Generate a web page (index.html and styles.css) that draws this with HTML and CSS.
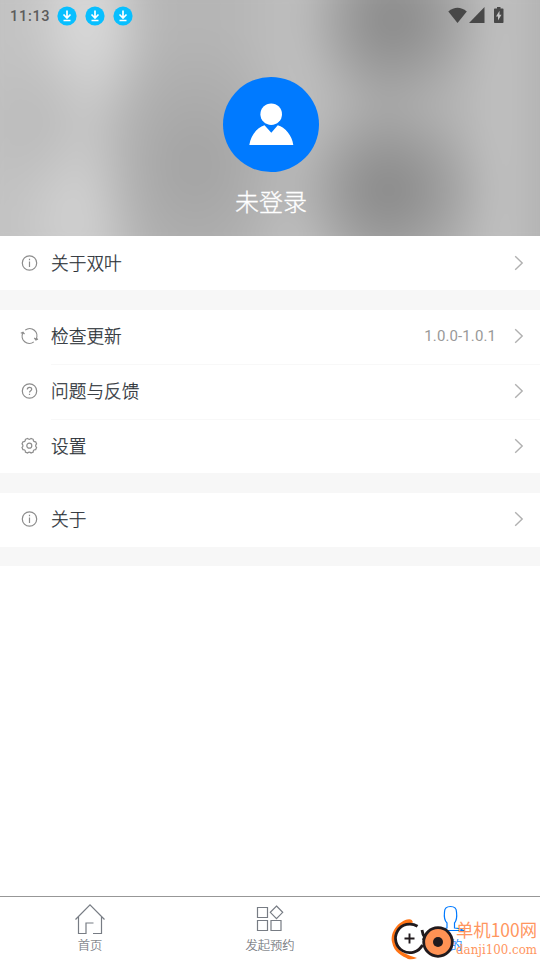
FILE: index.html
```html
<!DOCTYPE html>
<html lang="zh-CN">
<head>
<meta charset="utf-8">
<title>我的</title>
<link rel="stylesheet" href="styles.css">
</head>
<body>
<svg class="defs" aria-hidden="true">
  <symbol id="download" viewBox="0 0 20 20"><circle cx="10" cy="10" r="9.6" fill="#08bfff"/><path d="M10 4.5v7M6.5 8.5l3.5 3.5 3.5-3.5M6.5 14.5h7" fill="none" stroke="#fff" stroke-width="1.7"/></symbol>
  <symbol id="info" viewBox="0 0 18 18"><circle cx="9.500" cy="9" r="7.200"/><path d="M9.500 7.500v5.500M9.500 4.800v1.500"/></symbol>
  <symbol id="chevron" viewBox="0 0 10 16"><path d="M1.200 1.200 8.200 8l-7 6.800"/></symbol>
</svg>
<div class="app">
  <header class="hero">
    <div class="backdrop"></div>
    <div class="status">
      <span class="clock">11:13</span>
      <svg class="dl"><use href="#download"/></svg>
      <svg class="dl"><use href="#download"/></svg>
      <svg class="dl"><use href="#download"/></svg>
      <svg class="signals" viewBox="0 0 60 20"><path d="M.3 5.500Q9.500-2 18.800 5.500L9.500 17z"/><path d="M36.500 1v16H21z"/><path d="M49 1h3.500v1.500h2.200q.8 0 .8.800v13q0 .700-.8.700h-7.900q-.8 0-.8-.700v-13q0-.800.8-.800h2.200z"/><path d="M51.500 4.800 48 10.500h2v4L53.500 8.800h-2z" fill="#c4c4c4"/></svg>
    </div>
    <svg class="avatar" viewBox="0 0 96 96"><ellipse cx="48" cy="47.500" rx="48" ry="47.500" fill="#007aff"/><circle cx="48.200" cy="37.200" r="10.800" fill="#fff"/><path d="M26.300 68C28 58 34 50.500 41.500 48.300L48.300 55.700 54.800 48.300C62 50.500 69 58 70.300 68z" fill="#fff"/></svg>
    <div class="name">未登录</div>
  </header>
  <main class="list">
    <section class="group">
      <div class="row"><svg class="icon"><use href="#info"/></svg><span class="label">关于双叶</span><svg class="arrow"><use href="#chevron"/></svg></div>
    </section>
    <section class="group">
      <div class="row raised"><svg class="icon" viewBox="0 0 18 18"><path d="M5.200 3.100A7.200 7.200 0 0 1 16 12.200M13.800 14.900A7.200 7.200 0 0 1 3 5.800M.8 6.200l2.200-1 1.500 2M18 11.900l-2.100 1-1.600-2"/></svg><span class="label">检查更新</span><span class="version">1.0.0-1.0.1</span><svg class="arrow"><use href="#chevron"/></svg></div>
      <div class="row raised"><svg class="icon" viewBox="0 0 18 18"><circle cx="9.500" cy="9" r="7.200"/><path d="M7.300 7.400C7.300 4.700 11.700 4.700 11.700 7.200 11.700 8.800 9.500 8.700 9.500 10.600M9.500 11.700v1.300"/></svg><span class="label">问题与反馈</span><svg class="arrow"><use href="#chevron"/></svg></div>
      <div class="row"><svg class="icon" viewBox="0 0 18 18"><circle cx="9.300" cy="8.700" r="2.500"/><path d="M7.500 1.400Q9.300 3.300 11.100 1.400L13.200 2.300Q13.100 4.900 15.700 4.800L16.600 6.900Q14.700 8.700 16.600 10.500L15.700 12.600Q13.100 12.500 13.200 15.100L11.100 16Q9.300 14.100 7.500 16L5.400 15.100Q5.500 12.500 2.900 12.600L2 10.500Q3.900 8.700 2 6.900L2.900 4.800Q5.500 4.900 5.400 2.300z"/></svg><span class="label">设置</span><svg class="arrow"><use href="#chevron"/></svg></div>
    </section>
    <section class="group">
      <div class="row raised"><svg class="icon"><use href="#info"/></svg><span class="label">关于</span><svg class="arrow"><use href="#chevron"/></svg></div>
    </section>
  </main>
  <nav class="tabs">
    <div class="tab"><svg class="tab-icon" viewBox="0 0 32 32"><path d="M1.500 17.500 16 2.800l14.500 14.700M4.500 15v16.500h7.500V21h7.500M27.500 15v16.500h-8.500"/></svg><span>首页</span></div>
    <div class="tab"><svg class="tab-icon" viewBox="0 0 32 32"><path d="M3.500 5.500h10v10h-10zM3.500 18.500h10v10h-10zM17 18.500h10v10H17zM22.500 4l6.200 6.300-6.200 6.300-6.200-6.300z"/></svg><span>发起预约</span></div>
    <div class="tab active"><svg class="tab-icon" viewBox="0 0 32 32"><path d="M2 31v-2q4-2 11-3v-5C10 18 10 14 10.500 10Q10.500 4.500 16.500 4.500T22.500 10C23 14 23 18 20.500 21v5q6 .5 9 2.500H6"/></svg><span>我的</span></div>
  </nav>
  <svg class="watermark" viewBox="0 0 150 50">
    <path d="M23 12.500Q22 8 17 9.500C8 12 0 22 2 32 4 43 13 46 18 49Q22 50 27 48 20 46 16 44C6 40 4 32 6 26 8 18 15 14 23 12.500z" fill="#ff7416"/>
    <circle cx="19.500" cy="28.500" r="14" fill="#fff"/>
    <path d="M27.500 16.300A14.300 14.300 0 1 0 32.500 35M32 20Q32.500 25 35.500 28.500M40.500 20.500Q35 23 33.500 30" fill="none" stroke="#211a1d" stroke-width="2.800"/>
    <path d="M14.500 28.500h10M19.500 23.500v10" stroke="#211a1d" stroke-width="1.900"/>
    <circle cx="48" cy="32" r="14.300" fill="#ff9254" stroke="#211a1d" stroke-width="2.800"/>
    <circle cx="48" cy="32" r="5" fill="#211a1d"/>
    <text class="brand" x="66" y="27" textLength="81" lengthAdjust="spacingAndGlyphs">单机100网</text>
    <text class="domain" x="66" y="43.500" textLength="81" lengthAdjust="spacingAndGlyphs">danji100.com</text>
  </svg>
</div>
</body>
</html>
```
FILE: styles.css
```css
* { box-sizing: border-box; }
body { margin: 0; background: #fff; font-family: Roboto, "Noto Sans CJK SC", sans-serif; }
.defs { position: absolute; width: 0; height: 0; }
.app { width: 540px; height: 960px; display: flex; flex-direction: column; position: relative; overflow: hidden; }
.hero { height: 236px; flex: none; display: flex; flex-direction: column; align-items: center; position: relative; overflow: hidden; isolation: isolate; }
.backdrop {
  position: absolute; inset: -40px; z-index: -1; filter: blur(18px);
  background:
    radial-gradient(ellipse 95px 85px at 434px 60px, #7e7e7ed0, #88888800),
    radial-gradient(ellipse 105px 85px at 428px 230px, #7e7e7ed0, #88888800),
    radial-gradient(ellipse 110px 130px at 235px 205px, #a2a2a2, #a6a6a600),
    radial-gradient(ellipse 65px 80px at 75px 165px, #b8b8b8cc, #b8b8b800),
    radial-gradient(ellipse 60px 110px at 130px 60px, #dddddd, #d4d4d400),
    radial-gradient(ellipse 60px 120px at 118px 250px, #d2d2d2, #cccccc00),
    linear-gradient(90deg, #c2c2c2 0, #c2c2c2 40px, #c6c6c6 120px, #b5b5b5 200px, #b5b5b5 270px, #c0c0c0 340px, #a9a9a9 420px, #b2b2b2 490px, #c2c2c2 545px, #b0b0b0 590px);
}
.status { align-self: stretch; height: 32px; padding: 0 32px 0 10px; display: flex; align-items: center; }
.clock { width: 47px; font-size: 14.500px; letter-spacing: .7px; font-weight: 500; color: #5c5c5c; }
.dl { width: 20px; height: 20px; margin-right: 8px; }
.signals { width: 60px; height: 20px; margin-left: auto; margin-top: -1px; fill: #484848; }
.avatar { width: 96px; height: 96px; margin: 45px 0 0 2px; flex: none; }
.name { margin: 10px 0 0 2px; font-size: 24px; line-height: 36px; font-weight: 300; font-family: "Noto Sans CJK SC", sans-serif; color: #fff; -webkit-text-stroke: .3px; }
.list { flex: 1; }
.group { border-bottom: 20px solid #f7f7f7; }
.group:last-child { border-bottom-width: 19px; }
.row { height: 54px; padding: 0 16px 0 20px; display: flex; align-items: center; background: linear-gradient(#f8f8f8, #f8f8f8) 51px 0 / 100% 0 no-repeat; }
.row + .row { height: 55px; background-size: 100% 1px; }
.row + .row + .row { height: 54px; }
.row.raised { padding-bottom: 2px; }
.icon { width: 18px; height: 18px; margin-right: 13px; fill: none; stroke: #8c8c8c; stroke-width: 1.200; overflow: visible; }
.label { flex: 1; font-family: "Noto Sans CJK SC", sans-serif; font-weight: 300; font-size: 17.700px; line-height: 26px; padding-bottom: 2px; color: #2a3036; -webkit-text-stroke: .25px; }
.version { margin-right: 18px; font-size: 15px; letter-spacing: .1px; color: #999; }
.arrow { width: 10px; height: 16px; fill: none; stroke: #b0b0b0; stroke-width: 1.400; }
.tabs { height: 64px; border-top: 1px solid #979797; display: flex; }
.tab { flex: 1; display: flex; flex-direction: column; align-items: center; padding-top: 5px; color: #70747a; font-family: "Noto Sans CJK SC", sans-serif; font-weight: 300; font-size: 12.300px; line-height: 18px; -webkit-text-stroke: .15px; }
.tab span { margin-top: 2px; }
.tab-icon { width: 32px; height: 32px; fill: none; stroke: #777c84; stroke-width: 1.200; flex: none; }
.active { color: #007aff; }
.active .tab-icon { stroke: #007aff; }
.watermark { position: absolute; left: 390px; top: 910px; width: 150px; height: 50px; }
.brand { font: 18px "Noto Sans CJK SC", sans-serif; fill: #ff9660; }
.domain { font: 13.500px "DejaVu Serif", serif; fill: #ff9660; }
```
